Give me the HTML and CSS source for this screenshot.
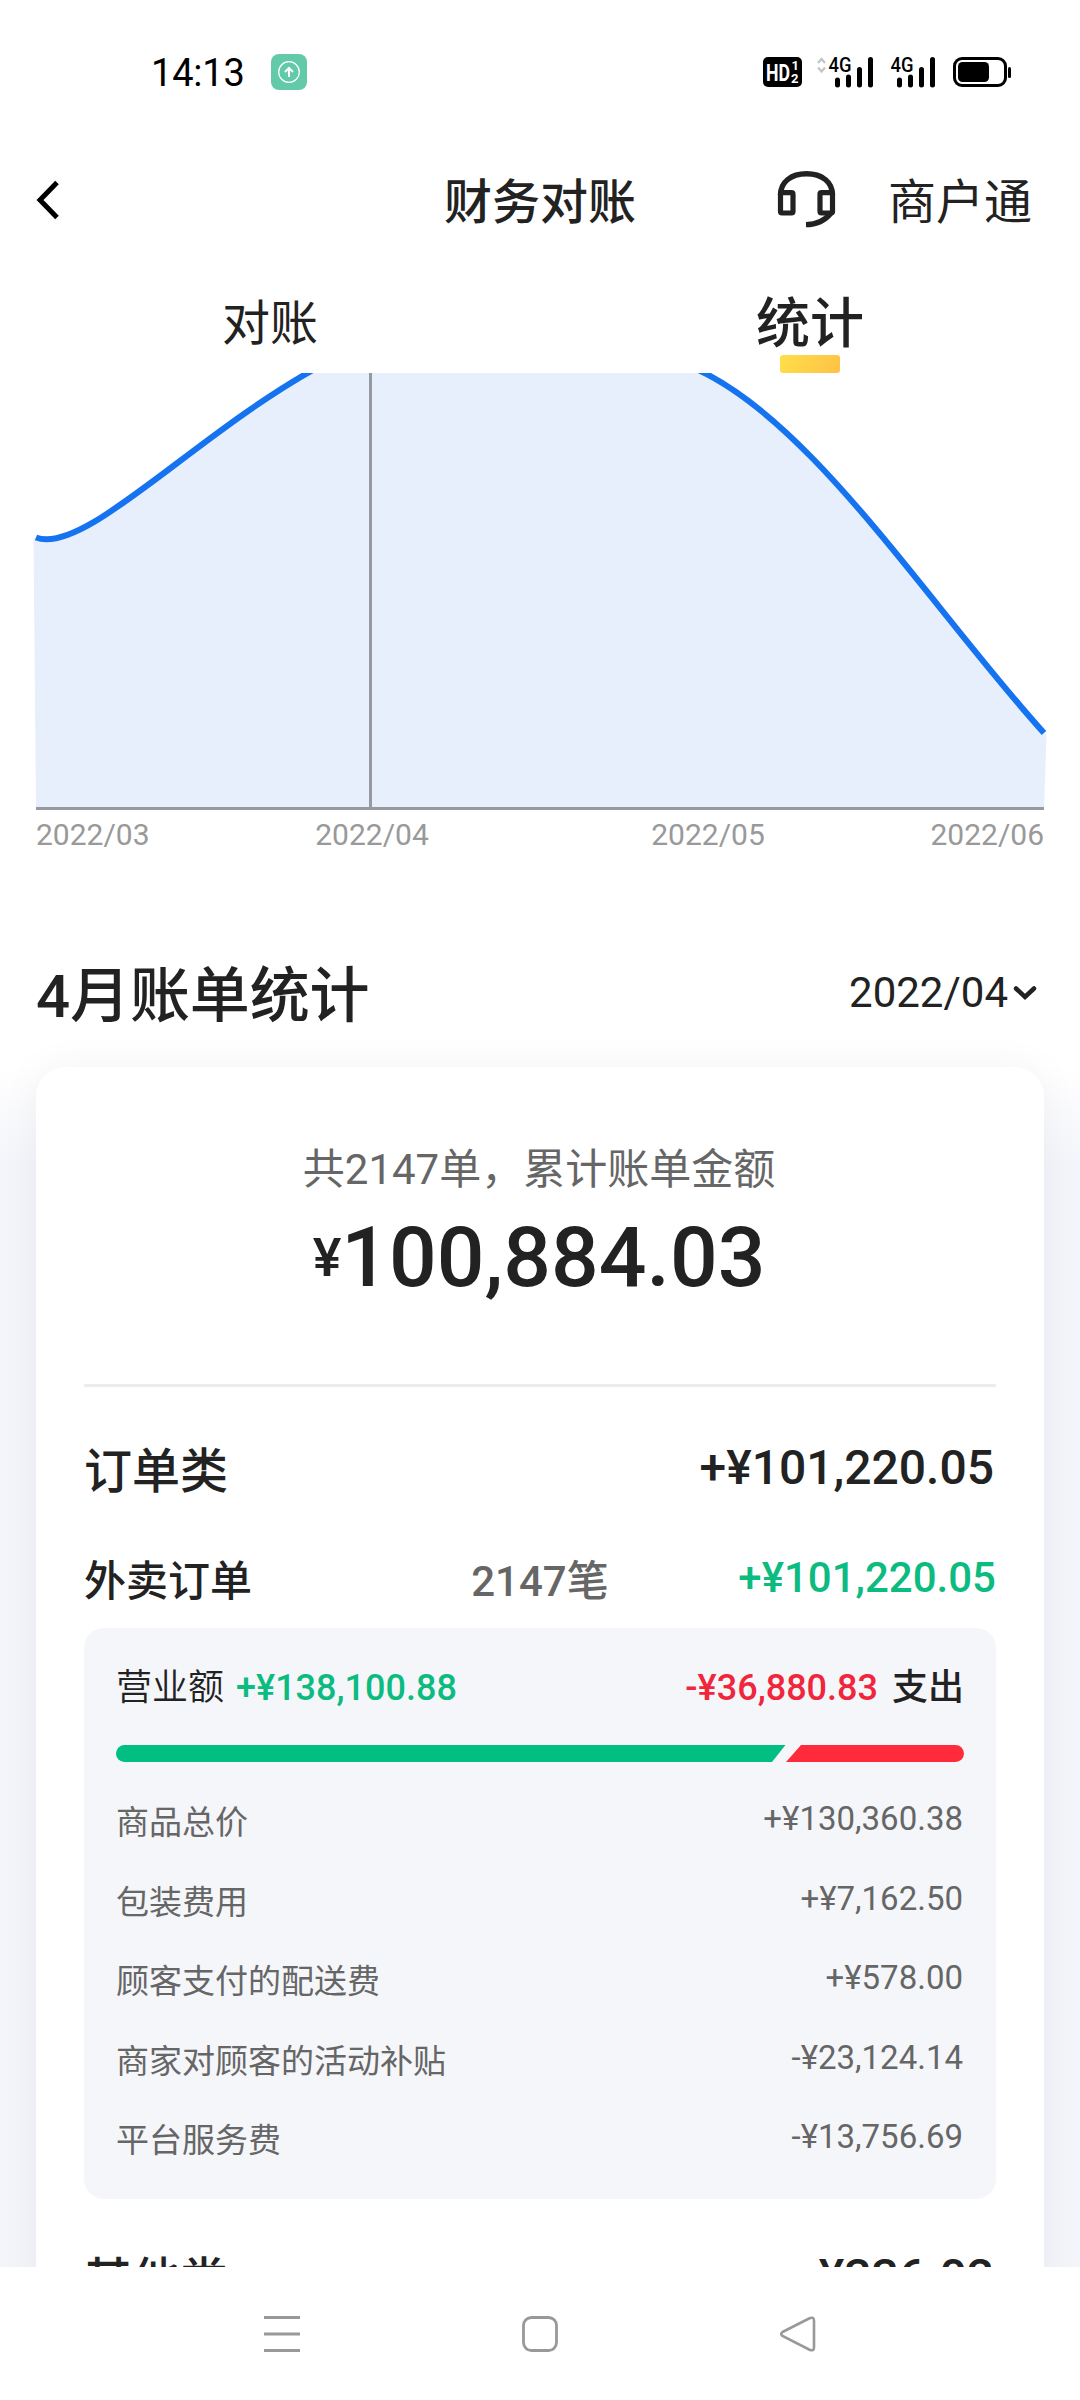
FILE: index.html
```
<!DOCTYPE html>
<html lang="zh-CN">
<head>
<meta charset="utf-8">
<title>财务对账</title>
<link rel="stylesheet" href="styles.css">
</head>
<body>
<div class="screen">
  <div class="status">
    <div class="status-left">
      <span class="time">14:13</span>
      <svg class="app-badge" width="36" height="36" viewBox="0 0 36 36"><rect width="36" height="36" rx="8" fill="#62c9a9"/><circle cx="18" cy="18" r="10.3" fill="none" stroke="#fff" stroke-width="1.2"/><path d="M18 23V14.5M14 18l4-4 4 4" fill="none" stroke="#fff" stroke-width="2"/></svg>
    </div>
    <svg class="status-icons" width="250" height="52" viewBox="762 46 250 52">
      <rect x="763" y="57" width="39" height="30" rx="5"/>
      <text class="hd" x="766" y="80.500" textLength="24" lengthAdjust="spacingAndGlyphs">HD</text>
      <text class="hd-sub" x="791.500" y="70">1</text>
      <text class="hd-sub" x="791" y="82.500">2</text>
      <path d="M818 63l3.500-4 3.500 4M818 67.500l3.500 4 3.500-4" fill="none" stroke="#c4c4c4" stroke-width="2.200"/>
      <text class="net" x="828.500" y="72" textLength="23" lengthAdjust="spacingAndGlyphs">4G</text>
      <path d="M837.500 80v5M848.500 77v8M859.500 69.500v15.500M870.500 59.500v25.500M899.500 80v5M910.500 77v8M921.500 69.500v15.500M932.500 59.500v25.500" stroke="#000" stroke-width="5" stroke-linecap="round"/>
      <text class="net" x="890.500" y="72" textLength="23" lengthAdjust="spacingAndGlyphs">4G</text>
      <rect x="954.500" y="58.500" width="51" height="27" rx="7.500" fill="none" stroke="#000" stroke-width="3"/>
      <rect x="958" y="62" width="31" height="20" rx="4.500"/>
      <rect x="1008" y="67" width="3" height="11" rx="1.500"/>
    </svg>
  </div>

  <header class="titlebar">
    <svg class="back" width="26" height="44" viewBox="0 0 26 44"><path d="M21 4.500L4 22l17 17.500" fill="none" stroke="#000" stroke-width="5"/></svg>
    <h1 class="title">财务对账</h1>
    <div class="service">
      <svg width="60" height="60" viewBox="0 0 60 60"><path d="M4.500 25C4.500 12 15 3.700 30.500 3.700S56.500 12 56.500 25" fill="none" stroke="#222" stroke-width="5.400"/><rect x="4.500" y="22.700" width="12.500" height="20.300" rx="1.500" fill="none" stroke="#222" stroke-width="5.200"/><rect x="44" y="22.700" width="12.500" height="20.300" rx="1.500" fill="none" stroke="#222" stroke-width="5.200"/><path d="M55 43C49 50.500 41 54.600 30 54.600" fill="none" stroke="#222" stroke-width="5.400"/></svg>
      <span>商户通</span>
    </div>
  </header>

  <nav class="tabs">
    <div class="tab"><span>对账</span></div>
    <div class="tab tab-active"><span>统计</span><i class="tab-line"></i></div>
  </nav>

  <main class="content">
    <section class="chart">
      <svg class="plot" width="1080" height="437" viewBox="0 373 1080 437">
        <path d="M36 808L33.500 538 36 537.500C84 556 195 434 320 366H684C804 408 926 602 1044 733L1046.500 735 1044 808Z" fill="#e7effc"/>
        <path d="M36 537.500C84 556 195 434 320 366M684 364C804 408 926 602 1044 733" fill="none" stroke="#1673f0" stroke-width="6"/>
        <path d="M370.500 373V808M36 808.500H1044" stroke="#96999f" stroke-width="3"/>
      </svg>
      <div class="axis"><span>2022/03</span><span>2022/04</span><span>2022/05</span><span>2022/06</span></div>
    </section>

    <div class="heading">
      <h2>4月账单统计</h2>
      <div class="month"><span>2022/04</span><svg width="24" height="16" viewBox="0 0 24 16"><path d="M3 3.500l9 8.500 9-8.500" fill="none" stroke="#222" stroke-width="4.500" stroke-linecap="round"/></svg></div>
    </div>

    <section class="bill">
      <div class="card">
        <div class="summary">
          <p class="summary-label">共2147单，累计账单金额</p>
          <p class="summary-amount"><span class="yen">¥</span><span>100,884.03</span></p>
        </div>
        <div class="category"><span>订单类</span><span class="num">+¥101,220.05</span></div>
        <div class="order"><span>外卖订单</span><span class="count">2147笔</span><span class="income num">+¥101,220.05</span></div>
        <div class="panel">
          <div class="flow">
            <span class="flow-name">营业额</span><span class="income">+¥138,100.88</span>
            <span class="expense">-¥36,880.83</span><span class="flow-out">支出</span>
          </div>
          <svg class="ratio" width="848" height="17" viewBox="0 0 848 17"><path d="M8.500 0H669.500L656 17H8.500A8.500 8.500 0 0 1 8.500 0Z" fill="#00bf80"/><path d="M685 0H839.500A8.500 8.500 0 0 1 839.500 17H670Z" fill="#ff2a3c"/></svg>
          <ul class="details">
            <li><span>商品总价</span><span class="sum">+¥130,360.38</span></li>
            <li><span>包装费用</span><span class="sum">+¥7,162.50</span></li>
            <li><span>顾客支付的配送费</span><span class="sum">+¥578.00</span></li>
            <li><span>商家对顾客的活动补贴</span><span class="sum">-¥23,124.14</span></li>
            <li><span>平台服务费</span><span class="sum">-¥13,756.69</span></li>
          </ul>
        </div>
        <div class="category category-next"><span>其他类</span><span class="num">-¥336.02</span></div>
      </div>
    </section>
  </main>

  <footer class="sysnav">
    <svg width="36" height="36" viewBox="0 0 36 36"><path d="M0 1.500H36M0 18H36M0 34.500H36" stroke="#999" stroke-width="3"/></svg>
    <svg width="36" height="36" viewBox="0 0 36 36"><rect x="1.500" y="1.500" width="33" height="33" rx="8" fill="none" stroke="#999" stroke-width="2.800"/></svg>
    <svg width="36" height="36" viewBox="0 0 36 36"><path d="M2.500 16L29.500 2.300Q34 .500 34 4.500V31.500Q34 35.500 29.500 33.700L2.500 20Q0 18 2.500 16Z" fill="none" stroke="#999" stroke-width="2.600"/></svg>
  </footer>
</div>
</body>
</html>
```
FILE: styles.css
```
* { box-sizing: border-box; margin: 0; padding: 0; }
body {
  width: 1080px;
  background: #fff;
  color: #222;
  font-family: Roboto, "Noto Sans CJK SC", sans-serif;
}
.screen { display: flex; flex-direction: column; height: 2400px; overflow: hidden; }

.status {
  display: flex;
  justify-content: space-between;
  align-items: center;
  height: 144px;
  padding: 0 68px 0 151px;
  flex: none;
}
.status-left { display: flex; align-items: center; gap: 26px; }
.time { font-size: 38px; line-height: 44px; color: #000; width: 94px; padding-top: 2px; letter-spacing: -0.2px; }
.hd, .hd-sub, .net { font-family: Roboto, sans-serif; font-weight: 700; }
.hd { font-size: 23px; fill: #fff; }
.hd-sub { font-size: 13px; fill: #fff; }
.net { font-size: 21px; font-weight: 500; }

.titlebar {
  display: grid;
  grid-template-columns: 1fr auto 1fr;
  align-items: center;
  height: 112px;
  padding: 0 48px 0 36px;
  flex: none;
}
.title { font-size: 48px; font-weight: 500; line-height: 60px; margin-left: 12px; padding-top: 5px; }
.service { display: flex; justify-content: flex-end; align-items: center; gap: 52px; font-size: 48px; line-height: 60px; }
.service span { padding-top: 5px; }

.tabs { display: flex; height: 117px; flex: none; }
.tab { flex: 1; display: flex; flex-direction: column; align-items: center; justify-content: space-between; font-size: 48px; line-height: 60px; padding-top: 38px; }
.tab-active { font-size: 54px; font-weight: 500; padding-top: 39px; }
.tab-line { width: 60px; height: 18px; border-radius: 3px; background: linear-gradient(120deg, #ffdf4a, #ffc145); }

.content { height: 1894px; overflow: hidden; flex: none; }
.plot { display: block; }
.axis {
  display: grid;
  grid-template-columns: 1fr 2fr 2fr 1fr;
  padding: 7px 36px 0;
  font-size: 30px;
  line-height: 36px;
  color: #999;
  text-align: center;
}
.axis span:first-child { text-align: left; }
.axis span:last-child { text-align: right; }

.heading { display: flex; justify-content: space-between; height: 80px; margin: 101px 43px 0 36px; }
.heading h2 { font-size: 60px; font-weight: 500; line-height: 80px; padding-top: 3px; letter-spacing: -0.1px; }
.month { display: flex; align-items: center; gap: 5px; height: 78px; font-size: 42px; line-height: 50px; }

.bill { padding: 33px 36px 0; background: linear-gradient(#fff 33px, #f4f5fa 130px); }
.card { height: 1300px; padding: 0 48px; border-radius: 30px; background: #fff; box-shadow: 0 0 40px rgba(0, 0, 0, .05); }
.summary { display: flex; flex-direction: column; align-items: center; height: 320px; padding-top: 78px; border-bottom: 3px solid #ececee; }
.summary-label { font-size: 42px; line-height: 50px; color: #666; margin-right: 2px; }
.summary-amount { display: flex; align-items: center; font-size: 84px; font-weight: 500; line-height: 100px; margin: 12px 2px 0 0; }
.yen { font-size: 54px; padding-top: 1px; }

.category { display: flex; justify-content: space-between; font-size: 48px; font-weight: 500; line-height: 60px; padding: 55px 2px 0 0; }
.order { display: grid; grid-template-columns: 1fr auto 1fr; font-size: 42px; font-weight: 500; line-height: 50px; padding-top: 55px; }
.order .income { text-align: right; }
.count { color: #666; }
.num { margin-top: -4px; }
.income { color: #0cbb7f; }
.expense { color: #f0263c; margin-left: auto; }

.panel { height: 571px; margin-top: 21px; padding: 37px 32px 0; border-radius: 20px; background: #f5f6fa; }
.flow { display: flex; font-size: 36px; line-height: 46px; }
.income, .expense, .flow-out { font-weight: 500; }
.flow-name { font-weight: 350; margin-right: 12px; }
.flow-out { margin-left: 14px; }
.ratio { display: block; margin-top: 34px; }
.details { list-style: none; margin-top: 41px; font-size: 33px; color: #666; }
.details li { display: flex; justify-content: space-between; height: 79.5px; line-height: 40px; }
.sum { margin: -4px 1px 0 0; }
.category-next { padding-top: 52px; }

.sysnav { display: flex; justify-content: space-between; padding: 49px 264px 0; flex: 1; background: #fff; }
```
